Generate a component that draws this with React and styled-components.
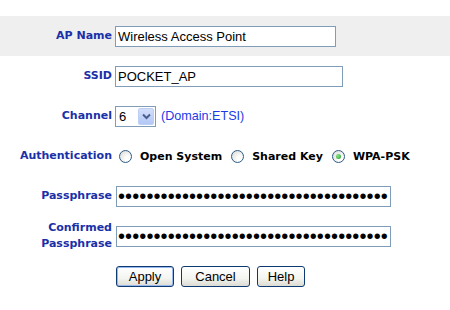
import styled, { createGlobalStyle } from 'styled-components';

const Global = createGlobalStyle`
  body {
    margin: 0;
    background: #fff;
    font-family: "Liberation Sans", Arial, sans-serif;
  }
`;

const Page = styled.div`
  padding-top: 16px;
  width: 450px;
`;

const Row = styled.div`
  display: grid;
  grid-template-columns: 112px 1fr;
  column-gap: ${p => p.$gap || 3}px;
  align-items: center;
  height: 40px;
  background: ${p => (p.$shaded ? '#efefef' : 'transparent')};
`;

const Label = styled.div`
  text-align: right;
  font-family: "DejaVu Sans", Verdana, sans-serif;
  font-weight: bold;
  font-size: 11px;
  line-height: 16px;
  color: #1a30a8;
`;

const Field = styled.div`
  display: flex;
  align-items: center;
  gap: ${p => p.$gap || 0}px;
`;

const TextInput = styled.input`
  box-sizing: border-box;
  width: ${p => p.$w}px;
  height: 21px;
  margin: 0 0 0 ${p => p.$shift || 0}px;
  padding: 0 2px;
  border: 1px solid #7f9db9;
  background: #fff;
  font-family: "Liberation Sans", Arial, sans-serif;
  font-size: 13px;
  color: #000;
  outline: none;
`;

const Dots = styled(TextInput)`
  font-size: 20px;
  letter-spacing: 0.1px;
  padding: 0 1px;
  line-height: 19px;
`;

const SelectBox = styled.div`
  box-sizing: border-box;
  display: flex;
  align-items: center;
  justify-content: space-between;
  width: 41px;
  height: 21px;
  border: 1px solid #7f9db9;
  padding: 1px 1px 1px 3px;
  font-size: 13px;
  color: #000;
`;

const Arrow = styled.span`
  box-sizing: border-box;
  display: flex;
  align-items: center;
  justify-content: center;
  width: 16px;
  height: 17px;
  border-radius: 2px;
  border: 1px solid #bcd0f6;
  background: linear-gradient(#d2defb, #b4c8f6);
`;

const Note = styled.span`
  font-size: 12.6px;
  color: #1a3ae8;
`;

const Radio = styled.span`
  box-sizing: border-box;
  display: inline-flex;
  align-items: center;
  justify-content: center;
  width: 13px;
  height: 13px;
  margin-left: ${p => p.$ml || 0}px;
  border-radius: 50%;
  border: 1px solid #2b5a86;
  background: radial-gradient(circle at 70% 70%, #ffffff 20%, #d6d6d0 100%);

  &::after {
    content: '';
    width: 5px;
    height: 5px;
    border-radius: 50%;
    background: ${p => (p.$on ? 'radial-gradient(circle at 35% 35%, #8ee68e, #1f9a1f)' : 'transparent')};
  }
`;

const Option = styled.span`
  margin-left: 8px;
  font-family: "DejaVu Sans", Verdana, sans-serif;
  font-weight: bold;
  font-size: 11px;
  color: #000;
`;

const Buttons = styled.div`
  display: flex;
  gap: 7px;
  margin-left: 1px;
`;

const Button = styled.button`
  box-sizing: border-box;
  width: ${p => p.$w}px;
  height: 21px;
  padding: 0;
  border: 1px solid #0d3a73;
  border-radius: 3px;
  background: linear-gradient(#ffffff 0%, #f4f4f0 60%, #dcdcd4 100%);
  box-shadow: ${p => (p.$primary ? 'inset 0 0 0 1px #98b8ee' : 'none')};
  font-family: "Liberation Sans", Arial, sans-serif;
  font-size: 13px;
  color: #000;
`;

const pass = '•'.repeat(38);

export default function App() {
  return (
    <Page>
      <Global />
      <Row $shaded>
        <Label>AP Name</Label>
        <Field>
          <TextInput $w={221} defaultValue="Wireless Access Point" />
        </Field>
      </Row>
      <Row>
        <Label>SSID</Label>
        <Field>
          <TextInput $w={228} defaultValue="POCKET_AP" />
        </Field>
      </Row>
      <Row>
        <Label>Channel</Label>
        <Field $gap={5}>
          <SelectBox>
            <span>6</span>
            <Arrow>
              <svg width="9" height="7" viewBox="0 0 9 7">
                <path d="M1 1.5 L4.5 5 L8 1.5" fill="none" stroke="#4a5f8c" strokeWidth="2" />
              </svg>
            </Arrow>
          </SelectBox>
          <Note>(Domain:ETSI)</Note>
        </Field>
      </Row>
      <Row>
        <Label>Authentication</Label>
        <Field>
          <Radio $ml={4} />
          <Option>Open System</Option>
          <Radio $ml={9} />
          <Option>Shared Key</Option>
          <Radio $ml={9} $on />
          <Option>WPA-PSK</Option>
        </Field>
      </Row>
      <Row>
        <Label>Passphrase</Label>
        <Field>
          <Dots $w={275} $shift={1} defaultValue={pass} />
        </Field>
      </Row>
      <Row>
        <Label>Confirmed<br />Passphrase</Label>
        <Field>
          <Dots $w={275} $shift={1} defaultValue={pass} />
        </Field>
      </Row>
      <Row>
        <span />
        <Buttons>
          <Button $w={58} $primary>Apply</Button>
          <Button $w={69}>Cancel</Button>
          <Button $w={48}>Help</Button>
        </Buttons>
      </Row>
    </Page>
  );
}
